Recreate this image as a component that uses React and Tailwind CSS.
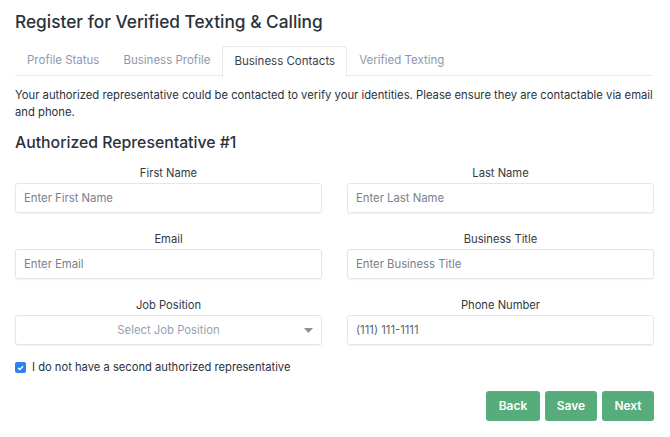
import React from 'react';

const font = { fontFamily: 'Inter, "Noto Sans", sans-serif' };

const Field = ({ label, placeholder, value }) => (
  <div className="flex flex-col">
    <label className="text-center text-[11.2px] text-[#333a45] leading-[16px] mb-[2px]">{label}</label>
    <div className="h-[30px] border border-[#e3e6ec] rounded-[3px] shadow-[0_1px_2px_rgba(0,0,0,0.06)] flex items-center px-[8px] text-[11.3px]">
      {value ? (
        <span className="text-[#5d6470]">{value}</span>
      ) : (
        <span className="text-[#7a818c]">{placeholder}</span>
      )}
    </div>
  </div>
);

export default function App() {
  const tabs = ['Profile Status', 'Business Profile', 'Business Contacts', 'Verified Texting'];
  const active = 'Business Contacts';

  return (
    <div className="w-[670px] h-[437px] bg-white px-[15px] pt-[9px] text-[#2b313b]" style={font}>
      <h1 className="text-[17.3px] leading-[26px] font-medium text-[#2b313b]">Register for Verified Texting &amp; Calling</h1>

      {/* Tabs */}
      <div className="mt-[11px] flex border-b border-[#e6e8ee] mr-[2px] h-[30px]">
        {tabs.map((t) => (
          <div
            key={t}
            className={
              t === active
                ? 'px-[11px] h-[31px] flex items-center text-[11.5px] text-[#3a414c] bg-white border border-b-0 border-[#e6e8ee] rounded-t-[4px]'
                : 'px-[12px] h-[30px] flex items-center text-[11.5px] text-[#8f98ae]'
            }
          >
            {t}
          </div>
        ))}
      </div>

      <p className="mt-[11px] text-[11.25px] leading-[17px] text-[#2b313b]">
        Your authorized representative could be contacted to verify your identities. Please ensure they are contactable via email and phone.
      </p>

      <h2 className="mt-[11px] text-[15.8px] leading-[22px] font-medium text-[#2b313b]">Authorized Representative #1</h2>

      <div className="mt-[11px] grid grid-cols-2 gap-x-[25px] gap-y-[18px] pr-[1px]">
        <Field label="First Name" placeholder="Enter First Name" />
        <Field label="Last Name" placeholder="Enter Last Name" />
        <Field label="Email" placeholder="Enter Email" />
        <Field label="Business Title" placeholder="Enter Business Title" />
        <div className="flex flex-col">
          <label className="text-center text-[11.2px] text-[#333a45] leading-[16px] mb-[2px]">Job Position</label>
          <div className="relative h-[30px] border border-[#e3e6ec] rounded-[3px] shadow-[0_1px_2px_rgba(0,0,0,0.06)] flex items-center justify-center text-[11.3px] text-[#97a0b5]">
            Select Job Position
            <svg className="absolute right-[8px] top-[12px]" width="9" height="5" viewBox="0 0 9 5">
              <path d="M0 0 L9 0 L4.5 5 Z" fill="#8a8f98" />
            </svg>
          </div>
        </div>
        <Field label="Phone Number" value="(111) 111-1111" />
      </div>

      <div className="mt-[14px] flex items-center gap-[6px] h-[17px]">
        <span className="w-[11px] h-[11px] rounded-[2px] bg-[#2f80f0] flex items-center justify-center">
          <svg width="7" height="6" viewBox="0 0 7 6">
            <path d="M1 3 L2.8 4.6 L6 1.2" stroke="white" strokeWidth="1.4" fill="none" />
          </svg>
        </span>
        <span className="text-[11.2px] text-[#2b313b]">I do not have a second authorized representative</span>
      </div>

      <div className="mt-[15px] flex justify-end gap-[5px] pr-[1px]">
        <button className="h-[30px] w-[54px] rounded-[3px] bg-[#56ad7b] text-white text-[12px] font-semibold">Back</button>
        <button className="h-[30px] w-[52px] rounded-[3px] bg-[#56ad7b] text-white text-[12px] font-semibold">Save</button>
        <button className="h-[30px] w-[52px] rounded-[3px] bg-[#56ad7b] text-white text-[12px] font-semibold">Next</button>
      </div>
    </div>
  );
}
